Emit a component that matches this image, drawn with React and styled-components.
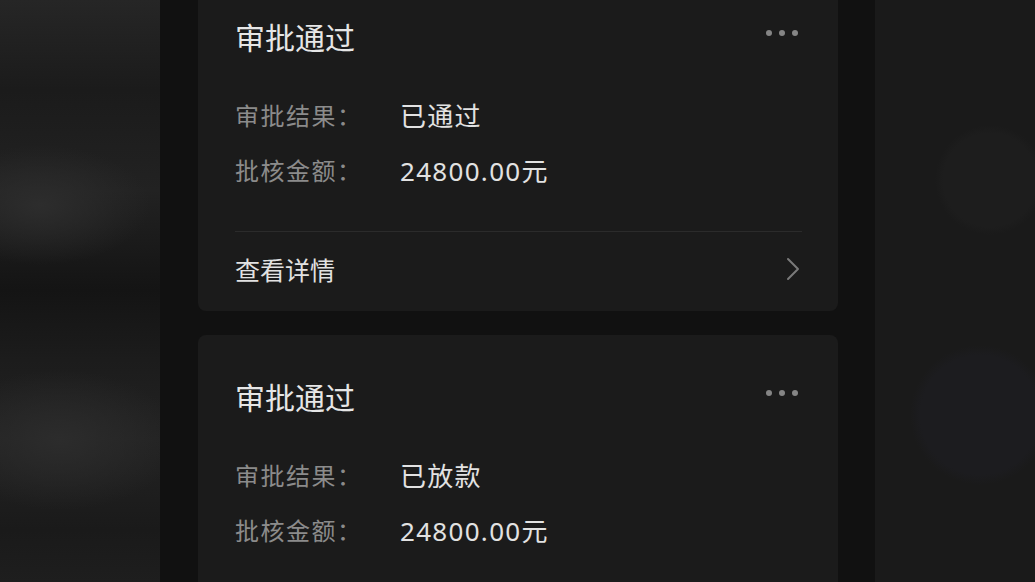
import React from 'react'
import styled, { createGlobalStyle } from 'styled-components'

const GlobalStyle = createGlobalStyle`
  html, body {
    margin: 0;
    padding: 0;
    background: #121212;
    overflow: hidden;
  }
  body {
    font-family: 'Noto Sans', 'Noto Sans CJK SC', sans-serif;
  }
`

const Page = styled.div`
  display: flex;
  width: 1035px;
  height: 582px;
  overflow: hidden;
`

const BlurSide = styled.div`
  width: 160px;
  flex-shrink: 0;
  background: ${props => props.side === 'left'
    ? `radial-gradient(ellipse 110px 60px at 40px 205px, #2d2d2d 0%, rgba(45,45,45,0) 100%),
       radial-gradient(ellipse 120px 70px at 60px 440px, #2c2c2c 0%, rgba(44,44,44,0) 100%),
       linear-gradient(180deg, #262626 0px, #1b1b1b 90px, #222 190px, #141414 290px, #1c1c1c 360px, #232323 440px, #1a1a1a 530px, #1e1e1e 582px)`
    : `radial-gradient(circle 55px at 115px 180px, #1d1d1d 0%, #1d1d1d 85%, rgba(29,29,29,0) 100%),
       radial-gradient(circle 70px at 105px 415px, #1c1c1f 0%, #1c1c1f 85%, rgba(28,28,31,0) 100%),
       #1a1a1a`};
`

const Column = styled.main`
  flex: 1;
  background: #111111;
  padding: 0 37px 0 38px;
  display: flex;
  flex-direction: column;
  gap: 24px;
`

const Card = styled.section`
  background: #1b1b1b;
  border-radius: 8px;
  padding: 0 36px 0 37px;
  &:first-child {
    margin-top: -25px;
  }
`

const CardHeader = styled.header`
  display: flex;
  align-items: center;
  justify-content: space-between;
  height: 122px;
  margin-bottom: 2px;
`

const Title = styled.h2`
  margin: 0;
  font-size: 30px;
  font-weight: 400;
  color: #e6e6e6;
`

const MoreDots = styled.div`
  display: flex;
  gap: 7px;
  margin: 0 4px 6px 0;
  span {
    width: 6px;
    height: 6px;
    border-radius: 50%;
    background: #858585;
  }
`

const Fields = styled.dl`
  margin: 0;
  display: grid;
  grid-template-columns: 165px 1fr;
  row-gap: 21px;
  padding-bottom: 43px;
  align-items: center;
`

const Label = styled.dt`
  font-size: 24px;
  line-height: 34px;
  color: #8b8b8b;
  letter-spacing: 1.5px;
`

const Value = styled.dd`
  margin: 0;
  font-size: 26px;
  line-height: 34px;
  color: #e2e2e2;
  letter-spacing: 1.3px;
`

const Footer = styled.footer`
  display: flex;
  align-items: center;
  justify-content: space-between;
  height: 80px;
  box-sizing: border-box;
  padding-bottom: 6px;
  border-top: 1px solid #2b2b2b;
`

const FooterText = styled.span`
  font-size: 25px;
  color: #e2e2e2;
`

const Chevron = () => (
  <svg width="18" height="26" viewBox="0 0 18 26" fill="none">
    <path d="M4 3 L14 13 L4 23" stroke="#7a7a7a" strokeWidth="2" strokeLinecap="round" strokeLinejoin="round" />
  </svg>
)

const records = [
  { result: '已通过', amount: '24800.00元', footer: true },
  { result: '已放款', amount: '24800.00元', footer: false },
]

const App = () => (
  <>
    <GlobalStyle />
    <Page>
      <BlurSide side='left' />
      <Column>
        {records.map((r, i) => (
          <Card key={i}>
            <CardHeader>
              <Title>审批通过</Title>
              <MoreDots><span /><span /><span /></MoreDots>
            </CardHeader>
            <Fields>
              <Label>审批结果：</Label>
              <Value>{r.result}</Value>
              <Label>批核金额：</Label>
              <Value>{r.amount}</Value>
            </Fields>
            {r.footer && (
              <Footer>
                <FooterText>查看详情</FooterText>
                <Chevron />
              </Footer>
            )}
          </Card>
        ))}
      </Column>
      <BlurSide side='right' />
    </Page>
  </>
)

export default App
